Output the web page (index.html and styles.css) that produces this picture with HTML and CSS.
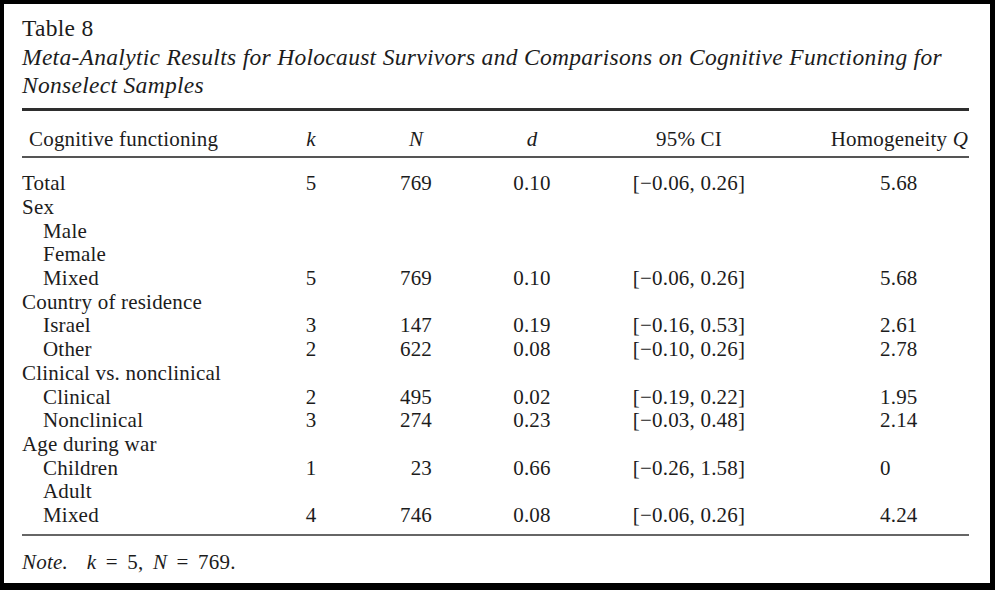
FILE: index.html
```html
<!DOCTYPE html>
<html lang="en">
<head>
<meta charset="utf-8">
<title>Table 8</title>
<link rel="stylesheet" href="styles.css">
</head>
<body>
<div class="page">
  <div class="caption">
    <div class="label">Table 8</div>
    <div class="title">Meta-Analytic Results for Holocaust Survivors and Comparisons on Cognitive Functioning for Nonselect Samples</div>
  </div>
  <table class="data">
    <colgroup>
      <col class="c-label">
      <col class="c-k">
      <col class="c-n">
      <col class="c-d">
      <col class="c-ci">
      <col class="c-q">
    </colgroup>
    <thead>
      <tr>
        <th class="lab">Cognitive functioning</th>
        <th><i>k</i></th>
        <th><i>N</i></th>
        <th><i>d</i></th>
        <th>95% CI</th>
        <th class="qh">Homogeneity <i>Q</i></th>
      </tr>
    </thead>
    <tbody>
      <tr class="first"><td class="lab">Total</td><td>5</td><td>769</td><td>0.10</td><td>[−0.06, 0.26]</td><td class="q">5.68</td></tr>
      <tr><td class="lab">Sex</td><td></td><td></td><td></td><td></td><td class="q"></td></tr>
      <tr><td class="lab sub">Male</td><td></td><td></td><td></td><td></td><td class="q"></td></tr>
      <tr><td class="lab sub">Female</td><td></td><td></td><td></td><td></td><td class="q"></td></tr>
      <tr><td class="lab sub">Mixed</td><td>5</td><td>769</td><td>0.10</td><td>[−0.06, 0.26]</td><td class="q">5.68</td></tr>
      <tr><td class="lab">Country of residence</td><td></td><td></td><td></td><td></td><td class="q"></td></tr>
      <tr><td class="lab sub">Israel</td><td>3</td><td>147</td><td>0.19</td><td>[−0.16, 0.53]</td><td class="q">2.61</td></tr>
      <tr><td class="lab sub">Other</td><td>2</td><td>622</td><td>0.08</td><td>[−0.10, 0.26]</td><td class="q">2.78</td></tr>
      <tr><td class="lab">Clinical vs. nonclinical</td><td></td><td></td><td></td><td></td><td class="q"></td></tr>
      <tr><td class="lab sub">Clinical</td><td>2</td><td>495</td><td>0.02</td><td>[−0.19, 0.22]</td><td class="q">1.95</td></tr>
      <tr><td class="lab sub">Nonclinical</td><td>3</td><td>274</td><td>0.23</td><td>[−0.03, 0.48]</td><td class="q">2.14</td></tr>
      <tr><td class="lab">Age during war</td><td></td><td></td><td></td><td></td><td class="q"></td></tr>
      <tr><td class="lab sub">Children</td><td>1</td><td>&#8199;23</td><td>0.66</td><td>[−0.26, 1.58]</td><td class="q">0</td></tr>
      <tr><td class="lab sub">Adult</td><td></td><td></td><td></td><td></td><td class="q"></td></tr>
      <tr class="last"><td class="lab sub">Mixed</td><td>4</td><td>746</td><td>0.08</td><td>[−0.06, 0.26]</td><td class="q">4.24</td></tr>
    </tbody>
  </table>
  <p class="note"><i>Note.</i>&nbsp; <i>k</i> = 5, <i>N</i> = 769.</p>
</div>
</body>
</html>
```

FILE: styles.css
```css
html {
  background: #000;
}
body {
  margin: 0;
  padding: 4px 5px 7px 4px;
  background: #000;
}
.page {
  background: #fff;
  height: 579px;
  box-sizing: border-box;
  padding: 10px 0 0 18px;
  color: #1c1c1c;
  font-family: "Liberation Serif", "Times New Roman", serif;
  overflow: hidden;
}
.caption {
  font-size: 23.5px;
  line-height: 28.5px;
  letter-spacing: 0.3px;
  width: 960px;
}
.title {
  font-style: italic;
}
.data {
  margin-top: 8px;
  width: 947px;
  border-collapse: collapse;
  table-layout: fixed;
  border-top: 3px solid #2e2e2e;
  font-size: 21px;
  line-height: 23.7px;
  letter-spacing: 0.2px;
}
.c-label { width: 248px; }
.c-k { width: 82px; }
.c-n { width: 128px; }
.c-d { width: 104px; }
.c-ci { width: 210px; }
.c-q { width: 175px; }
.data th,
.data td {
  padding: 0;
  text-align: center;
  font-weight: normal;
  white-space: nowrap;
}
.data thead th {
  padding-top: 17px;
  padding-bottom: 5px;
  border-bottom: 2px solid #555;
}
.data th.lab,
.data td.lab {
  text-align: left;
  padding-left: 0;
}
.data th.lab {
  padding-left: 7px;
}
.data td.sub {
  padding-left: 21px;
}
.data th.qh {
  text-align: right;
  padding-right: 1px;
}
.data td.q {
  text-align: left;
  padding-left: 86px;
}
.data tr.first td {
  padding-top: 14px;
}
.data tr.last td {
  padding-bottom: 6px;
  border-bottom: 2px solid #666;
}
.note {
  margin: 15px 0 0;
  font-size: 21px;
  line-height: 23.7px;
  letter-spacing: 0.2px;
  word-spacing: 4px;
}
```
